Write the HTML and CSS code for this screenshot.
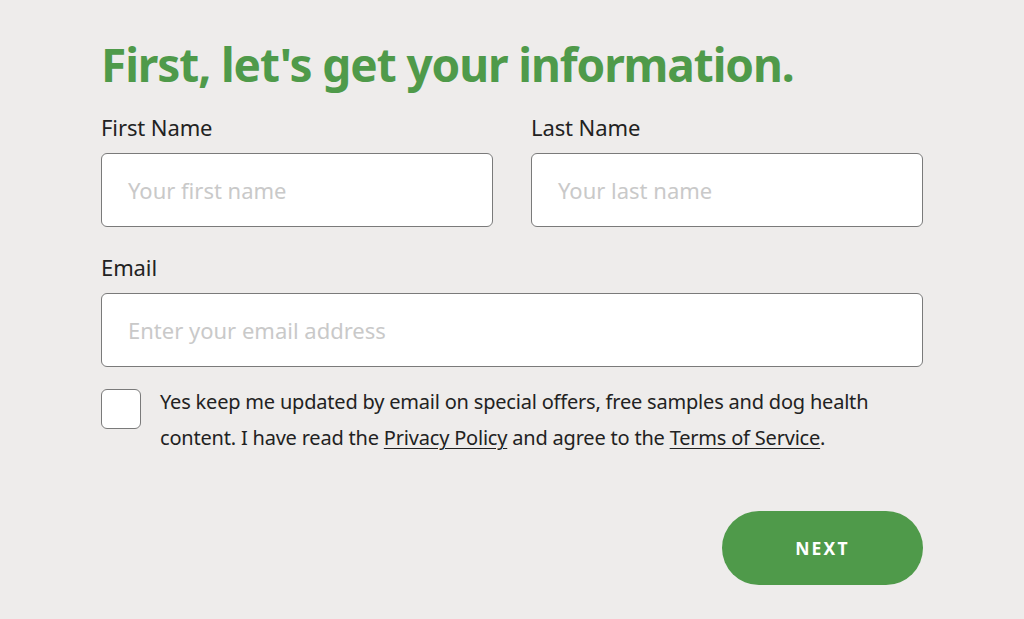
FILE: index.html
```html
<!DOCTYPE html>
<html>
<head>
<meta charset="utf-8">
<link rel="stylesheet" href="styles.css">
</head>
<body>
<main class="form">
  <h1 class="title">First, let's get your information.</h1>
  <div class="row">
    <div class="field">
      <label class="label">First Name</label>
      <div class="input"><span class="ph">Your first name</span></div>
    </div>
    <div class="field">
      <label class="label">Last Name</label>
      <div class="input"><span class="ph">Your last name</span></div>
    </div>
  </div>
  <div class="field email">
    <label class="label">Email</label>
    <div class="input"><span class="ph">Enter your email address</span></div>
  </div>
  <div class="consent">
    <div class="checkbox"></div>
    <p class="consent-text">Yes keep me updated by email on special offers, free samples and dog health content. I have read the <a class="link">Privacy Policy</a> and agree to the <a class="link">Terms of Service</a>.</p>
  </div>
  <div class="actions">
    <button class="next">NEXT</button>
  </div>
</main>
</body>
</html>
```
FILE: styles.css
```css
html, body {
  margin: 0;
  padding: 0;
  background: #eeeceb;
}
body {
  font-family: "Noto Sans", "Open Sans", sans-serif;
  color: #222;
  width: 1024px;
  height: 619px;
  overflow: hidden;
}
.form {
  width: 822px;
  margin-left: 101px;
  padding-top: 34px;
}
.title {
  margin: 0;
  font-size: 46px;
  line-height: 60px;
  font-weight: 700;
  color: #4f9a4a;
  letter-spacing: -1.1px;
}
.row {
  display: flex;
  gap: 38px;
  margin-top: 20px;
}
.row .field {
  flex: 1;
}
.label {
  display: block;
  font-size: 22px;
  line-height: 26px;
  color: #222;
  margin-bottom: 13px;
  letter-spacing: -0.1px;
}
.input {
  box-sizing: border-box;
  height: 74px;
  background: #fff;
  border: 1px solid #7a7a7a;
  border-radius: 6px;
  display: flex;
  align-items: center;
  padding-left: 26px;
}
.ph {
  font-size: 22px;
  color: #c9c9c9;
}
.email {
  margin-top: 27px;
}
.consent {
  display: flex;
  gap: 19px;
  margin-top: 22px;
}
.checkbox {
  flex: none;
  width: 40px;
  height: 40px;
  box-sizing: border-box;
  border: 1px solid #7a7a7a;
  border-radius: 6px;
  background: #fff;
}
.consent-text {
  margin: -5px 0 0;
  font-size: 20px;
  line-height: 36px;
  color: #222;
  letter-spacing: -0.2px;
  max-width: 740px;
}
.link {
  color: #222;
  text-decoration: underline;
  text-underline-offset: 3px;
  text-decoration-thickness: 1px;
}
.actions {
  display: flex;
  justify-content: flex-end;
  margin-top: 55px;
}
.next {
  width: 201px;
  height: 74px;
  border: none;
  border-radius: 37px;
  background: #4f9a4a;
  color: #fff;
  font-family: "Noto Sans", sans-serif;
  font-weight: 700;
  font-size: 17.5px;
  letter-spacing: 2.2px;
}
```
